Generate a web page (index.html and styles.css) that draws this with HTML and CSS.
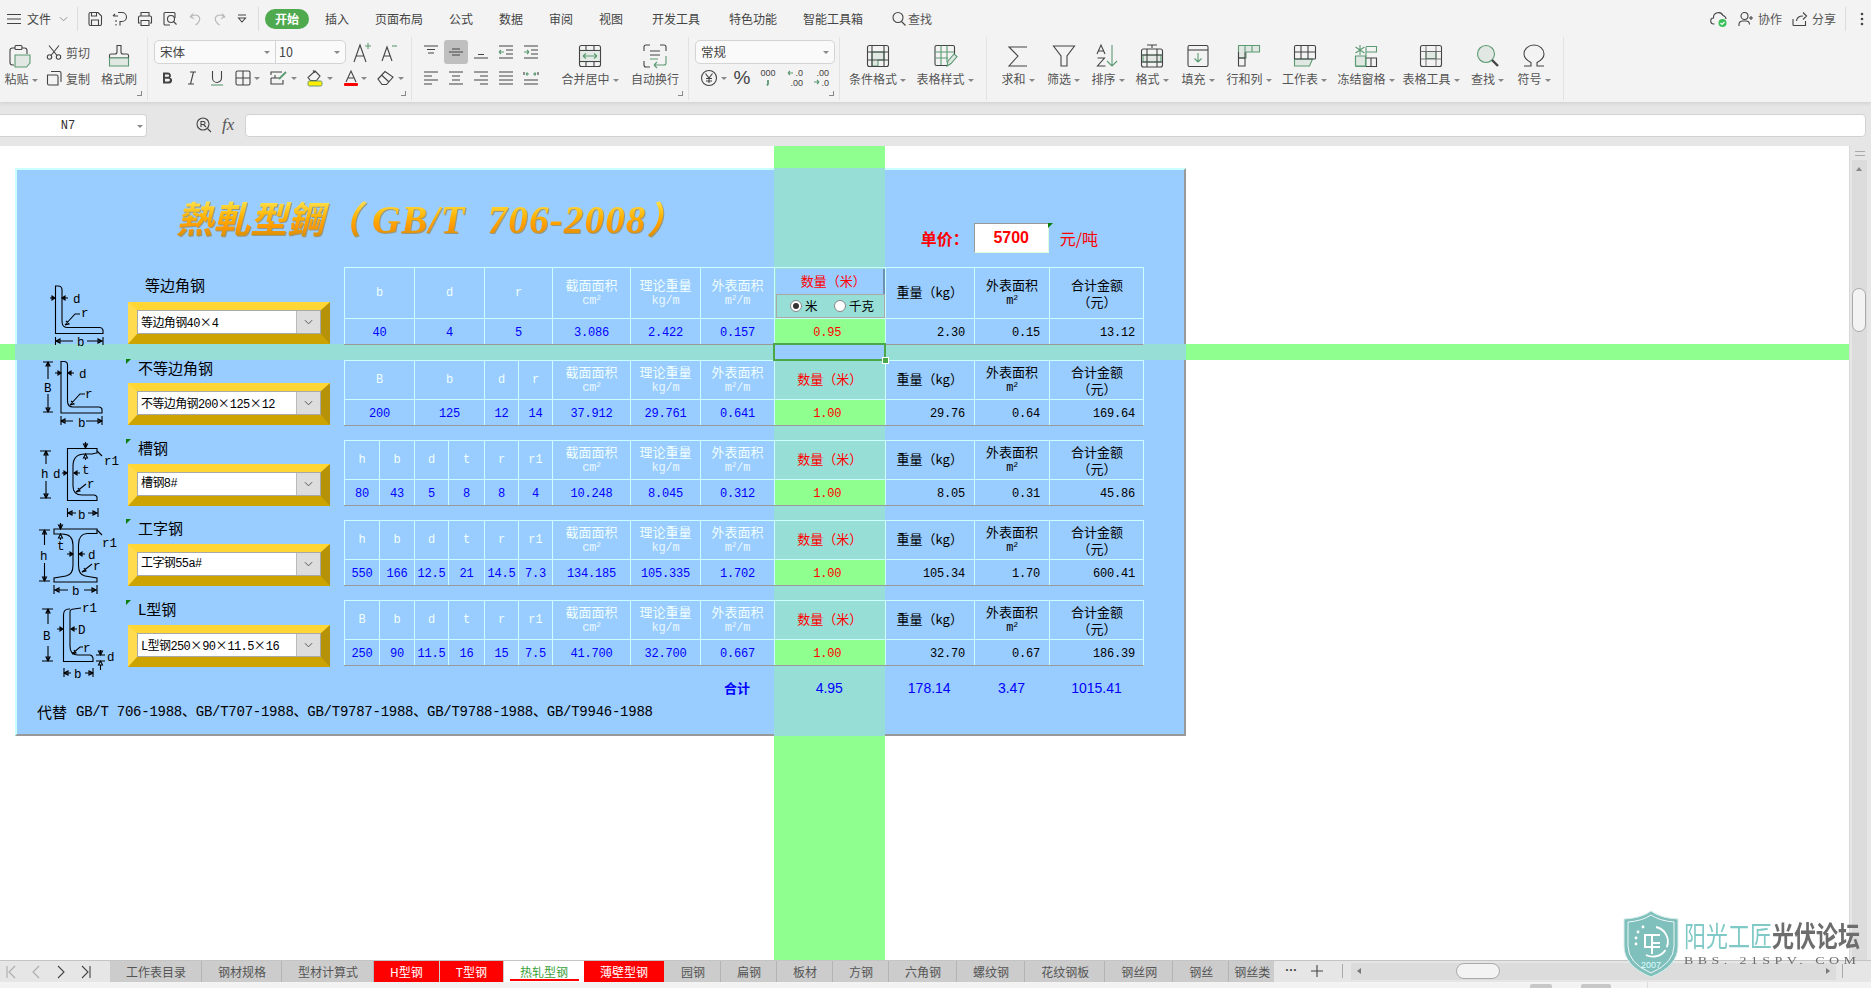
FILE: index.html
```html
<!DOCTYPE html>
<html lang="zh">
<head>
<meta charset="utf-8">
<title>热轧型钢</title>
<link rel="stylesheet" href="styles.css">
</head>
<body>
<div class="app">

<header class="topbar">
  <svg class="i14 menu" viewBox="0 0 14 14"><path class="s" d="M0 2.5h14M0 7h14M0 11.5h14"/></svg>
  <span class="file">文件</span>
  <svg class="chev" viewBox="0 0 10 6"><path class="l" d="M1 1l4 4 4-4"/></svg>
  <i class="vsep"></i>
  <svg class="i16 q1" viewBox="0 0 16 16"><path class="s" d="M2 3q0-1.500 1.500-1.500H11L14.500 5v8q0 1.500-1.500 1.500H3.500Q2 14.500 2 13zM4.500 14.500V9h7v5.500M4.500 1.500V5h5V1.500"/></svg>
  <svg class="i16 q" viewBox="0 0 16 16"><path class="s" d="M1 5h5M1 5l2-2M6 1.500h4a4.500 4.500 0 010 9H8v4M4 9v2M4 13v1.500"/></svg>
  <svg class="i16 q" viewBox="0 0 16 16"><path class="s" d="M4 5V1.500h8V5M3 12H1.500V6.500Q1.500 5 3 5h10q1.500 0 1.500 1.500V12H13M4 9.500h8v5H4z"/></svg>
  <svg class="i16 q" viewBox="0 0 16 16"><path class="s" d="M13 7V2.500Q13 1.500 12 1.500H3Q2 1.500 2 2.500V13q0 1 1 1h5"/><circle class="s" cx="9" cy="8" r="3.500"/><path class="s" d="M11.500 10.500l3 3"/></svg>
  <svg class="i16 q dim" viewBox="0 0 16 16"><path class="s" d="M3 6l3-3.500M3 6l4 1.500M3.500 6Q7 3 10.500 4.500q3.500 2 1.500 6-1 2-3.500 3.500"/></svg>
  <svg class="i16 q dim" viewBox="0 0 16 16"><path class="s" d="M13 6l-3-3.500M13 6l-4 1.500M12.500 6Q9 3 5.500 4.500q-3.500 2-1.500 6 1 2 3.500 3.500"/></svg>
  <svg class="i10 q" viewBox="0 0 10 10"><path class="s" d="M1 1h8M1.500 4l3.500 4 3.500-4z"/></svg>
  <i class="vsep v2"></i>
  <span class="pill">开始</span>
  <nav class="tabs-top">
    <span class="w50">插入</span><span class="w74">页面布局</span><span class="w50">公式</span><span class="w50">数据</span><span class="w50">审阅</span><span class="w53">视图</span><span class="w77">开发工具</span><span class="w74">特色功能</span><span class="w88">智能工具箱</span>
  </nav>
  <span class="search"><svg class="i16" viewBox="0 0 16 16"><circle class="s" cx="7" cy="6.500" r="5"/><path class="s" d="M10.500 10.500l4 4"/></svg>查找</span>
  <div class="top-right">
    <svg class="i18" viewBox="0 0 18 18"><path class="s" d="M4.500 14H4a3 3 0 01-.5-6A5 5 0 0113 5.500 4 4 0 0116 9"/><circle cx="12.500" cy="13" r="4" fill="#3cc15a"/><path d="M10.500 13l1.500 1.500 2.500-2.500" fill="none" stroke="#fff" stroke-width="1.100"/></svg>
    <svg class="i16 mlg" viewBox="0 0 16 16"><circle class="s" cx="6.500" cy="5" r="3.500"/><path class="s" d="M1 15v-1.500Q1 10 5 10h3q3.500 0 3.500 3.500M11 7h4M13 5v4"/></svg>
    <span class="tx">协作</span>
    <svg class="i16 mlg" viewBox="0 0 16 16"><path class="s" d="M1 8v5.500q0 1 1 1h11.500V10M4.500 10Q5 5 11 5M11 1.500L14.500 5 11 8.500"/></svg>
    <span class="tx">分享</span>
    <i class="vsep v3"></i>
    <svg class="dots" viewBox="0 0 4 14"><circle cx="2" cy="2" r="1.300" fill="#444"/><circle cx="2" cy="7" r="1.300" fill="#444"/><circle cx="2" cy="12" r="1.300" fill="#444"/></svg>
  </div>
</header>

<section class="ribbon">
  <div class="group g1 corner">
    <div class="big paste">
      <svg class="i24" viewBox="0 0 24 24"><path class="s" d="M7 4H4.500Q2 4 2 6.500v12Q2 21 4.500 21H6M19 10V6.500Q19 4 16.500 4H14"/><rect class="s" x="7" y="1.500" width="7" height="4" rx="1"/><path class="gf" d="M7 11h15v8l-3.500 4H7z"/></svg>
      <span class="lb">粘贴<b class="cr"></b></span>
    </div>
    <div class="small-col">
      <span class="sm"><svg class="i16" viewBox="0 0 16 16"><circle class="s" cx="3.500" cy="13" r="2.200"/><circle class="s" cx="12.500" cy="13" r="2.200"/><path class="s" d="M5 11.500L13 1.500M11 11.500L3 1.500"/></svg>剪切</span>
      <span class="sm"><svg class="i16" viewBox="0 0 16 16"><path class="s" d="M5 1.500h8.500Q15 1.500 15 3v9M1.500 5h9Q12 5 12 6.500V15H3Q1.500 15 1.500 13.500z"/></svg>复制</span>
    </div>
    <div class="big brush">
      <svg class="i24" viewBox="0 0 24 24"><path class="s" d="M10 1.500h4V8q0 2 2 2h4q1.500 0 1.500 1.500V14h-19v-2.500Q2.500 10 4 10h4q2 0 2-2z"/><path class="gf" d="M2.500 14h19v8h-19z"/></svg>
      <span class="lb">格式刷</span>
    </div>
  </div>

  <div class="group g2 corner">
    <div class="row-a">
      <div class="combo font"><span class="combo-main">宋体<b class="cr"></b></span><span class="combo-size">10<b class="cr"></b></span></div>
      <svg class="i18 a1" viewBox="0 0 18 22"><path class="s" d="M1 21L7 4l6 17M3.500 15h7"/><path class="gs" d="M12 5h6M15 2v6"/></svg>
      <svg class="i18 a2" viewBox="0 0 18 22"><path class="s" d="M2 20L7 6l5 14M4 15h6"/><path class="gs" d="M12 5h5"/></svg>
    </div>
    <div class="row-b fontrow">
      <span class="cell"><svg class="i14" viewBox="0 0 14 14"><path d="M3 1.500h5a3 3 0 012 5.200 3 3 0 01-1.500 5.800H3zM5 3.500v2.300h3a1.150 1.150 0 000-2.300zM5 7.700v2.800h3.500a1.400 1.400 0 000-2.800z" fill="#444" fill-rule="evenodd"/></svg></span>
      <span class="cell"><svg class="i14" viewBox="0 0 14 14"><path class="s" d="M5 1h6M3 13h6M8.500 1L5.500 13"/></svg></span>
      <span class="cell"><svg class="i16" viewBox="0 0 16 16"><path class="s" d="M3.500 1v7a4.500 4.500 0 009 0V1"/><path class="gs" d="M2 15h12"/></svg></span>
      <span class="cell"><svg class="i16" viewBox="0 0 16 16"><path class="s" d="M1 2.500Q1 1 2.500 1h11Q15 1 15 2.500v11q0 1.500-1.500 1.500h-11Q1 15 1 13.500zM8 1v14M1 8h14"/></svg><b class="cr"></b></span>
      <span class="cell"><svg class="i18" viewBox="0 0 18 16"><path class="s" d="M1 8h9M1 5V2h11M1 8v6h12v-4M5 5v3"/><path class="gs2" d="M9 9l7-7"/></svg><b class="cr"></b></span>
      <span class="cell"><svg class="i18" viewBox="0 0 18 18"><path class="s" d="M9 2l5 5-3.500 4.500h-6L2 8.500zM7 1.500l2 2"/><rect x="2" y="12" width="14" height="5" rx="1.500" fill="#ffee00" stroke="#6b9a74"/></svg><b class="cr"></b></span>
      <span class="cell"><svg class="i14 h16" viewBox="0 0 14 16"><path class="s" d="M2 12L7 1l5 11M4 8h6"/><rect x="0" y="13" width="14" height="3" rx="1" fill="#f00"/></svg><b class="cr"></b></span>
      <span class="cell"><svg class="i18" viewBox="0 0 18 16"><path class="s" d="M1 9l7-7.500L16 7l-6.500 7.500H5zM4.500 5l7 6.500"/></svg><b class="cr"></b></span>
    </div>
  </div>

  <div class="group g3 corner">
    <div class="align-block">
      <div class="al-row">
        <span class="al"><svg class="i16" viewBox="0 0 16 16"><path class="s" d="M1 2h14M4 5.500h8M5 9h6"/></svg></span>
        <span class="al on"><svg class="i16" viewBox="0 0 16 16"><path class="s" d="M1 8h14M4 5h8M4 11h8"/></svg></span>
        <span class="al"><svg class="i16" viewBox="0 0 16 16"><path class="s" d="M1 14h14M5 10.500h6"/></svg></span>
        <span class="al"><svg class="i16" viewBox="0 0 16 16"><path class="s" d="M1 2h14M8 6h7M8 10h7M1 14h14"/><path class="gs" d="M1 8h5M1 8l2-2M1 8l2 2"/></svg></span>
        <span class="al"><svg class="i16" viewBox="0 0 16 16"><path class="s" d="M1 2h14M8 6h7M8 10h7M1 14h14"/><path class="gs" d="M1 8h5M6 8L4 6M6 8l-2 2"/></svg></span>
      </div>
      <div class="al-row">
        <span class="al"><svg class="i16" viewBox="0 0 16 16"><path class="s" d="M1 2h14M1 6h8M1 10h14M1 14h8"/></svg></span>
        <span class="al"><svg class="i16" viewBox="0 0 16 16"><path class="s" d="M1 2h14M4 6h8M1 14h14M4 10h8"/></svg></span>
        <span class="al"><svg class="i16" viewBox="0 0 16 16"><path class="s" d="M1 2h14M7 6h8M1 10h14M7 14h8"/></svg></span>
        <span class="al"><svg class="i16" viewBox="0 0 16 16"><path class="s" d="M1 2h14M1 6h14M1 10h14M1 14h14"/></svg></span>
        <span class="al"><svg class="i16" viewBox="0 0 16 16"><path class="s" d="M1 2v3M15 2v3M1 10h14M1 14h14"/><path class="gs" d="M3 4h3M3 4l1.500-1.500M3 4l1.500 1.500M13 4h-3M13 4l-1.500-1.500M13 4l-1.500 1.500"/></svg></span>
      </div>
    </div>
    <div class="big merge">
      <svg class="i24" viewBox="0 0 24 24"><path class="gf2" d="M2 5h20v14H2z"/><rect class="s" x="1.500" y="1.500" width="21" height="21" rx="2"/><path class="s" d="M1.500 6.500h21M1.500 17.500h21M8 1.500v5M16 1.500v5M8 17.500v5M16 17.500v5"/><path class="gs" d="M5 12h14M5 12l3-2.500M5 12l3 2.500M19 12l-3-2.500M19 12l-3 2.500"/></svg>
      <span class="lb">合并居中<b class="cr"></b></span>
    </div>
    <div class="big wrap">
      <svg class="i24" viewBox="0 0 24 24"><path class="s" d="M1 7V3q0-2 2-2h4M17 1h4q2 0 2 2v4M1 17v4q0 2 2 2h4M7 7h10M7 11h10"/><path class="gs" d="M23 12v7q0 2-2 2H11M11 21l3-3M11 21l3 3M7 15h8"/></svg>
      <span class="lb">自动换行</span>
    </div>
  </div>

  <div class="group g4 corner">
    <div class="combo num"><span class="combo-main">常规<b class="cr"></b></span></div>
    <div class="numrow">
      <span class="cell"><svg class="i18" viewBox="0 0 18 18"><circle class="s" cx="9" cy="9" r="7.500"/><path class="s" d="M5.500 4.500L9 9l3.500-4.500M9 9v5M6 9.500h6M6 12h6"/></svg><b class="cr"></b></span>
      <span class="cell"><span class="pct">%</span></span>
      <span class="cell"><svg class="i18" viewBox="0 0 18 18"><text class="dt" x="9" y="7" text-anchor="middle">000</text><path class="gs2" d="M9 11v4l-1 1.500"/></svg></span>
      <span class="cell"><svg class="i18" viewBox="0 0 18 18"><text class="dt" x="17" y="7" text-anchor="end">.0</text><text class="dt" x="17" y="17" text-anchor="end">.00</text><path class="gs" d="M2 4h5M2 4l2-2M2 4l2 2"/></svg></span>
      <span class="cell"><svg class="i18" viewBox="0 0 18 18"><text class="dt" x="17" y="7" text-anchor="end">.00</text><text class="dt" x="17" y="17" text-anchor="end">.0</text><path class="gs" d="M2 13h5M7 13l-2-2M7 13l-2 2"/></svg></span>
    </div>
  </div>

  <div class="group g5">
    <div class="big b72">
      <svg class="i24" viewBox="0 0 24 24"><path class="gf" d="M6 8h12v8h-6v6H6z"/><rect class="s" x="1.500" y="1.500" width="21" height="21" rx="2"/><path class="s" d="M1.500 8h21M1.500 16h21M6 1.500v21M18 1.500v21"/></svg>
      <span class="lb">条件格式<b class="cr"></b></span>
    </div>
    <div class="big b70">
      <svg class="i24" viewBox="0 0 24 24"><path class="s" d="M2 15V3q0-1.500 1.500-1.500H20Q21.500 1.500 21.500 3v8M2 15v5q0 1.500 1.500 1.500H14"/><path class="gs" d="M2 8h19M2 14h13M8 1.500V21M14 1.500v17"/><path class="gf" d="M14 22l1-5 6-7 3 2.500-6 7z"/></svg>
      <span class="lb">表格样式<b class="cr"></b></span>
    </div>
  </div>

  <div class="group g6">
    <div class="big"><svg class="i24" viewBox="0 0 24 24"><path class="s" d="M21 3H3l9 9-9 10h18"/></svg><span class="lb">求和<b class="cr"></b></span></div>
    <div class="big"><svg class="i24" viewBox="0 0 24 24"><path class="s" d="M1.500 2h21L15 12v10H9V12z"/></svg><span class="lb">筛选<b class="cr"></b></span></div>
    <div class="big"><svg class="i24" viewBox="0 0 24 24"><path class="s" d="M1 10L5 1l4 9M2.500 7h5M1.500 14h7l-7 8h8"/><path class="gs" d="M16 1v21M16 22l-5-5M16 22l5-5"/></svg><span class="lb">排序<b class="cr"></b></span></div>
    <div class="big"><svg class="i24" viewBox="0 0 24 24"><path class="gf" d="M3 11h18v7H3z"/><path class="s" d="M7 1h10M12 1v3"/><rect class="s" x="1.500" y="5" width="21" height="18" rx="2"/><path class="s" d="M1.500 11h21M1.500 18h21M7 5v18M17 5v18"/></svg><span class="lb">格式<b class="cr"></b></span></div>
    <div class="big"><svg class="i24" viewBox="0 0 24 24"><rect class="s" x="2" y="1.500" width="20" height="21" rx="1.500"/><path class="s" d="M2 6h20"/><path class="gs" d="M12 9v9M12 18l-3.500-3.500M12 18l3.500-3.500"/></svg><span class="lb">填充<b class="cr"></b></span></div>
    <div class="big"><svg class="i24" viewBox="0 0 24 24"><path class="gf" d="M1.500 1.500h21V8H9v6H1.500z"/><path class="gs" d="M8 1.500V8M15 1.500V8"/><path class="s" d="M1.500 8v14H8V8"/><path class="s" d="M1.500 14H8"/></svg><span class="lb">行和列<b class="cr"></b></span></div>
    <div class="big"><svg class="i24" viewBox="0 0 24 24"><path class="gf" d="M1.500 15h18l-3 7h-15z"/><path class="s" d="M1.500 15V3q0-1.500 1.500-1.500h18Q22.500 1.500 22.500 3v11q0 1-1 1H1.500M8 1.500V15M15 1.500V15M1.500 8h21"/></svg><span class="lb">工作表<b class="cr"></b></span></div>
    <div class="big"><svg class="i24" viewBox="0 0 24 24"><path class="gf" d="M1.500 12h10v10h-10z"/><path class="gs" d="M6 1v10M1.500 3l9 6M10.500 3l-9 6M1.500 12v9q0 1.500 1.500 1.500h9V3"/><path class="gs" d="M12 2.500h10.500V8H12"/><path class="s" d="M12 14h10.500v8.500H12M17 14v8.500"/></svg><span class="lb">冻结窗格<b class="cr"></b></span></div>
    <div class="big"><svg class="i24" viewBox="0 0 24 24"><rect class="s" x="1.500" y="1.500" width="21" height="21" rx="2"/><path class="gf" d="M7 7.500h10v7H7z"/><path class="s2" d="M7 1.500v21M17 1.500v21M1.500 7.500h21M1.500 15h21"/></svg><span class="lb">表格工具<b class="cr"></b></span></div>
    <div class="big"><svg class="i24" viewBox="0 0 24 24"><circle class="gf" cx="10" cy="10" r="8.500"/><path d="M16 16l6 6" stroke="#444" stroke-width="2.400" fill="none"/></svg><span class="lb">查找<b class="cr"></b></span></div>
    <div class="big"><svg class="i24" viewBox="0 0 24 24"><path class="s" d="M2 22h7v-3.500Q2 15 2 10a10 9 0 0120 0q0 5-7 8.500V22h7"/></svg><span class="lb">符号<b class="cr"></b></span></div>
  </div>
</section>

<section class="formula">
  <div class="namebox">N7<b class="cr"></b></div>
  <svg class="i16 zoomer" viewBox="0 0 16 16"><circle class="s" cx="7" cy="7" r="6"/><path class="s" d="M5 10V4.500h2.500a1.500 1.500 0 010 3H5M7.500 7.500L10 10M11.500 11.500l3.500 3.500"/></svg>
  <span class="fx">fx</span>
  <div class="fbox"></div>
</section>

<main class="sheet">
  <div class="viewport">
    <i class="band-col"></i>
    <i class="band-row"></i>
    <article class="panel">
      <i class="pband-col"></i>
      <i class="pband-row"></i>
      <div class="cellsel"><i class="handle"></i></div>

      <div class="headline">
        <h1 class="title"><span class="ttl-cj">熱軋型鋼（</span><span class="ttl-la"> GB/T  706-2008</span><span class="ttl-cj">）</span></h1>
        <div class="price">
          <span class="price-l">单价：</span>
          <span class="price-v">5700</span>
          <span class="price-u">元/吨</span>
        </div>
      </div>

      <div class="sec sec1">
        <svg class="sk" viewBox="17 267 109 90">
          <path class="ln" d="M55.500 286V333.500H103V330Q102 327.500 100 327.500H67Q62 327.500 62 321V290Q62 286 58 286Z"/>
          <path class="ln" d="M50 298h5M62 298h6M55 298l-3-2v4zM62 298l3-2v4zM65 325l10-11h5M65 325l4-1-3-3M55.500 337v8M103 337v8M56 341h17M87 341h15M56 341l4-2v4zM102 341l-4-2v4z"/>
          <text class="sktx" x="73" y="303">d</text><text class="sktx" x="81" y="317">r</text><text class="sktx" x="77" y="346">b</text>
        </svg>
        <div class="wd">
          <div class="name n1">等边角钢</div>
          <div class="frame"><div class="dd"><span class="dd-t">等边角钢40<b class="x">×</b>4</span><span class="dd-b"><svg class="ddi" viewBox="0 0 10 6"><path class="dl" d="M1 1l4 4 4-4"/></svg></span></div></div>
        </div>
        <div class="tbl t1">
          <div class="h s2">b</div><div class="h s2">d</div><div class="h s2">r</div>
          <div class="h"><span class="cj">截面面积</span><span class="un">cm<sup>2</sup></span></div>
          <div class="h"><span class="cj">理论重量</span><span class="un">kg/m</span></div>
          <div class="h"><span class="cj">外表面积</span><span class="un">m<sup>2</sup>/m</span></div>
          <div class="h qty-first"><div class="qtop">数量（米）</div><div class="qopt"><i class="radio on"></i><span class="rl">米</span><i class="radio"></i><span class="rl">千克</span></div></div>
          <div class="h k one"><span class="cj">重量（kg）</span></div>
          <div class="h k"><span class="cj">外表面积</span><span class="un k">m<sup>2</sup></span></div>
          <div class="h k"><span class="cj">合计金额</span><span class="cj">（元）</span></div>
          <div class="v s2">40</div><div class="v s2">4</div><div class="v s2">5</div><div class="v">3.086</div><div class="v">2.422</div><div class="v">0.157</div><div class="v qv">0.95</div><div class="v rt">2.30</div><div class="v rt">0.15</div><div class="v rt">13.12</div>
        </div>
      </div>

      <div class="sec sec2">
        <svg class="sk" viewBox="17 360 109 90">
          <path class="ln" d="M61 361.500V413H102V409Q101 407 99 407H73Q67.500 407 67.500 401V365Q67.500 361.500 64 361.500Z"/>
          <path class="ln" d="M43 362h10M48 362v17M48 394v18M43 412h10M48 362l-2 4h4zM48 412l-2-4h4zM55 373h6M68 373h6M61 373l-3-2v4zM68 373l3-2v4zM70 405l10-11h5M70 405l4-1-3-3M61 416v9M102 416v9M61 421h12M86 421h15M61 421l4-2v4zM102 421l-4-2v4z"/>
          <text class="sktx" x="44" y="392">B</text><text class="sktx" x="79" y="378">d</text><text class="sktx" x="85" y="398">r</text><text class="sktx" x="78" y="427">b</text>
        </svg>
        <div class="wd">
          <div class="name"><i class="tick"></i>不等边角钢</div>
          <div class="frame"><div class="dd"><span class="dd-t">不等边角钢200<b class="x">×</b>125<b class="x">×</b>12</span><span class="dd-b"><svg class="ddi" viewBox="0 0 10 6"><path class="dl" d="M1 1l4 4 4-4"/></svg></span></div></div>
        </div>
        <div class="tbl">
          <div class="h s2">B</div><div class="h s2">b</div><div class="h">d</div><div class="h">r</div>
          <div class="h"><span class="cj">截面面积</span><span class="un">cm<sup>2</sup></span></div>
          <div class="h"><span class="cj">理论重量</span><span class="un">kg/m</span></div>
          <div class="h"><span class="cj">外表面积</span><span class="un">m<sup>2</sup>/m</span></div>
          <div class="h hq one"><span class="cj">数量（米）</span></div>
          <div class="h k one"><span class="cj">重量（kg）</span></div>
          <div class="h k"><span class="cj">外表面积</span><span class="un k">m<sup>2</sup></span></div>
          <div class="h k"><span class="cj">合计金额</span><span class="cj">（元）</span></div>
          <div class="v s2">200</div><div class="v s2">125</div><div class="v">12</div><div class="v">14</div><div class="v">37.912</div><div class="v">29.761</div><div class="v">0.641</div><div class="v qv">1.00</div><div class="v rt">29.76</div><div class="v rt">0.64</div><div class="v rt">169.64</div>
        </div>
      </div>

      <div class="sec">
        <svg class="sk" viewBox="17 440 109 90">
          <path class="ln" d="M97 448.500H67.500V500.500H97V497Q96 495 94 495H82Q73 495 73 486V466Q73 454 85 454H92Q96 453 97 453Z"/>
          <path class="ln" d="M40 451h11M46 451v13M46 481v17M40 498h11M46 451l-2 4h4zM46 498l-2-4h4zM62 473h5M74 473h6M67 473l-3-2v4zM74 473l3-2v4zM85.500 442v6M85.500 448l-2-4h4zM85.500 454l-2 4h4zM85.500 458v2M97 451l5 5M76 492l10-8M76 492l4-1-2-3M67.500 508v9M98 508v9M68 513h8M88 513h9M68 513l4-2v4zM97 513l-4-2v4z"/>
          <text class="sktx" x="41" y="478">h</text><text class="sktx" x="53" y="478">d</text><text class="sktx" x="82" y="474">t</text><text class="sktx" x="104" y="465">r1</text><text class="sktx" x="87" y="488">r</text><text class="sktx" x="78" y="519">b</text>
        </svg>
        <div class="wd">
          <div class="name"><i class="tick"></i>槽钢</div>
          <div class="frame f1"><div class="dd"><span class="dd-t">槽钢8#</span><span class="dd-b"><svg class="ddi" viewBox="0 0 10 6"><path class="dl" d="M1 1l4 4 4-4"/></svg></span></div></div>
        </div>
        <div class="tbl">
          <div class="h">h</div><div class="h">b</div><div class="h">d</div><div class="h">t</div><div class="h">r</div><div class="h">r1</div>
          <div class="h"><span class="cj">截面面积</span><span class="un">cm<sup>2</sup></span></div>
          <div class="h"><span class="cj">理论重量</span><span class="un">kg/m</span></div>
          <div class="h"><span class="cj">外表面积</span><span class="un">m<sup>2</sup>/m</span></div>
          <div class="h hq one"><span class="cj">数量（米）</span></div>
          <div class="h k one"><span class="cj">重量（kg）</span></div>
          <div class="h k"><span class="cj">外表面积</span><span class="un k">m<sup>2</sup></span></div>
          <div class="h k"><span class="cj">合计金额</span><span class="cj">（元）</span></div>
          <div class="v">80</div><div class="v">43</div><div class="v">5</div><div class="v">8</div><div class="v">8</div><div class="v">4</div><div class="v">10.248</div><div class="v">8.045</div><div class="v">0.312</div><div class="v qv">1.00</div><div class="v rt">8.05</div><div class="v rt">0.31</div><div class="v rt">45.86</div>
        </div>
      </div>

      <div class="sec">
        <svg class="sk" viewBox="17 520 109 90">
          <path class="ln" d="M54 529H97V533.500H87Q78.500 534 78.500 545V565Q78.500 575 85 576L97 578V582H54V578L66 576Q73 575 73 565V545Q73 534 62 534H54Z"/>
          <path class="ln" d="M39 530h11M44.500 530v15M44.500 563v18M39 581h11M44.500 530l-2 4h4zM44.500 581l-2-4h4zM67 554h6M79 554h6M73 554l-3-2v4zM79 554l3-2v4zM60.500 523v6M60.500 529l-2-4h4zM60.500 534l-2 4h4zM60.500 538v2M97 530l5 5M82 572l10-8M82 572l4-1-2-3M54 585v9M97 585v9M55 590h13M84 590h12M55 590l4-2v4zM96 590l-4-2v4z"/>
          <text class="sktx" x="40" y="560">h</text><text class="sktx" x="57" y="550">t</text><text class="sktx" x="88" y="559">d</text><text class="sktx" x="93" y="570">r</text><text class="sktx" x="102" y="547">r1</text><text class="sktx" x="72" y="595">b</text>
        </svg>
        <div class="wd">
          <div class="name"><i class="tick"></i>工字钢</div>
          <div class="frame f1"><div class="dd"><span class="dd-t">工字钢55a#</span><span class="dd-b"><svg class="ddi" viewBox="0 0 10 6"><path class="dl" d="M1 1l4 4 4-4"/></svg></span></div></div>
        </div>
        <div class="tbl">
          <div class="h">h</div><div class="h">b</div><div class="h">d</div><div class="h">t</div><div class="h">r</div><div class="h">r1</div>
          <div class="h"><span class="cj">截面面积</span><span class="un">cm<sup>2</sup></span></div>
          <div class="h"><span class="cj">理论重量</span><span class="un">kg/m</span></div>
          <div class="h"><span class="cj">外表面积</span><span class="un">m<sup>2</sup>/m</span></div>
          <div class="h hq one"><span class="cj">数量（米）</span></div>
          <div class="h k one"><span class="cj">重量（kg）</span></div>
          <div class="h k"><span class="cj">外表面积</span><span class="un k">m<sup>2</sup></span></div>
          <div class="h k"><span class="cj">合计金额</span><span class="cj">（元）</span></div>
          <div class="v">550</div><div class="v">166</div><div class="v">12.5</div><div class="v">21</div><div class="v">14.5</div><div class="v">7.3</div><div class="v">134.185</div><div class="v">105.335</div><div class="v">1.702</div><div class="v qv">1.00</div><div class="v rt">105.34</div><div class="v rt">1.70</div><div class="v rt">600.41</div>
        </div>
      </div>

      <div class="sec">
        <svg class="sk" viewBox="17 600 109 90">
          <path class="ln" d="M70 609H69Q63.500 609 63.500 615V661.500H93V658Q92 655 90 655H78Q70 655 70 646V612Q70 609 74 609"/>
          <path class="ln" d="M42 609h11M48 609v15M48 646v15M42 661h11M48 609l-2 4h4zM48 661l-2-4h4zM57 629h6M71 629h6M63 629l-3-2v4zM71 629l3-2v4zM72 654l8-7h3M72 654l4-1-2-3M74 609l7-1M100.500 650v5M96 655h9M100.500 655l-2-4h4zM100.500 661l-2 4h4zM96 661h9M100.500 665v5M64 668v9M93 668v9M64 673h7M85 673h8M64 673l4-2v4zM93 673l-4-2v4z"/>
          <text class="sktx" x="43" y="640">B</text><text class="sktx" x="78" y="634">D</text><text class="sktx" x="83" y="652">r</text><text class="sktx" x="82" y="612">r1</text><text class="sktx" x="107" y="661">d</text><text class="sktx" x="74" y="678">b</text>
        </svg>
        <div class="wd">
          <div class="name"><i class="tick"></i>L型钢</div>
          <div class="frame f2"><div class="dd"><span class="dd-t">L型钢250<b class="x">×</b>90<b class="x">×</b>11.5<b class="x">×</b>16</span><span class="dd-b"><svg class="ddi" viewBox="0 0 10 6"><path class="dl" d="M1 1l4 4 4-4"/></svg></span></div></div>
        </div>
        <div class="tbl">
          <div class="h">B</div><div class="h">b</div><div class="h">d</div><div class="h">t</div><div class="h">r</div><div class="h">r1</div>
          <div class="h"><span class="cj">截面面积</span><span class="un">cm<sup>2</sup></span></div>
          <div class="h"><span class="cj">理论重量</span><span class="un">kg/m</span></div>
          <div class="h"><span class="cj">外表面积</span><span class="un">m<sup>2</sup>/m</span></div>
          <div class="h hq one"><span class="cj">数量（米）</span></div>
          <div class="h k one"><span class="cj">重量（kg）</span></div>
          <div class="h k"><span class="cj">外表面积</span><span class="un k">m<sup>2</sup></span></div>
          <div class="h k"><span class="cj">合计金额</span><span class="cj">（元）</span></div>
          <div class="v">250</div><div class="v">90</div><div class="v">11.5</div><div class="v">16</div><div class="v">15</div><div class="v">7.5</div><div class="v">41.700</div><div class="v">32.700</div><div class="v">0.667</div><div class="v qv">1.00</div><div class="v rt">32.70</div><div class="v rt">0.67</div><div class="v rt">186.39</div>
        </div>
      </div>

      <div class="totals">
        <span class="t-name">合计</span><span>4.95</span><span>178.14</span><span>3.47</span><span>1015.41</span>
      </div>
      <p class="note"><span class="note-cj">代替</span>GB/T 706-1988、GB/T707-1988、GB/T9787-1988、GB/T9788-1988、GB/T9946-1988</p>
    </article>
  </div>
  <aside class="vscroll">
    <div class="vs-top"></div>
    <div class="vs-track"><i class="vs-up"></i><i class="vs-thumb"></i></div>
  </aside>
</main>

<footer class="tabbar">
  <div class="tabnav">
    <svg class="nav dim" viewBox="0 0 10 14"><path class="s" d="M1 1v12M9 1L3 7l6 6"/></svg>
    <svg class="nav dim" viewBox="0 0 10 14"><path class="s" d="M8 1L2 7l6 6"/></svg>
    <svg class="nav" viewBox="0 0 10 14"><path class="s" d="M2 1l6 6-6 6"/></svg>
    <svg class="nav" viewBox="0 0 10 14"><path class="s" d="M1 1l6 6-6 6M9 1v12"/></svg>
  </div>
  <div class="sheets">
    <span class="st">工作表目录</span><span class="st">钢材规格</span><span class="st">型材计算式</span><span class="st red">H型钢</span><span class="st red">T型钢</span><span class="st act">热轧型钢</span><span class="st red">薄壁型钢</span><span class="st">园钢</span><span class="st">扁钢</span><span class="st">板材</span><span class="st">方钢</span><span class="st">六角钢</span><span class="st">螺纹钢</span><span class="st">花纹钢板</span><span class="st">钢丝网</span><span class="st">钢丝</span><span class="st cut">钢丝类</span>
  </div>
  <span class="more">···</span>
  <svg class="plus" viewBox="0 0 12 12"><path class="s" d="M6 0v12M0 6h12"/></svg>
  <i class="hs-sep hs-a"></i>
  <div class="hscroll"><i class="hs-l"></i><i class="hs-thumb"></i><i class="hs-r"></i></div>
  <i class="hs-sep hs-b"></i>
</footer>
<div class="status"><i class="st-a"></i><i class="st-b"></i><i class="st-c"></i></div>

<div class="mark">
  <svg class="shield" viewBox="0 0 58 68">
    <path d="M29 1Q38 8 56 9V36Q56 56 29 67Q2 56 2 36V9Q20 8 29 1Z" fill="#7fc0bd" stroke="#d8eeec" stroke-width="1"/>
    <path d="M29 5Q38 11 52 12V36Q52 53 29 63Q6 53 6 36V12Q20 11 29 5Z" fill="none" stroke="#eef8f7" stroke-width="1"/>
    <path d="M34 17A15 15 0 1 1 24 45" fill="none" stroke="#fff" stroke-width="1.800" stroke-dasharray="26 3"/>
    <path d="M38 25H23V37H38M30 25V44M30 33H38" fill="none" stroke="#fff" stroke-width="2"/>
    <circle cx="14" cy="28" r="1.400" fill="#fff"/><circle cx="16" cy="22" r="1.400" fill="#fff"/><circle cx="21" cy="17" r="1.400" fill="#fff"/><circle cx="14" cy="34" r="1.400" fill="#fff"/>
    <text class="mk-y" x="29" y="58" text-anchor="middle">2007</text>
  </svg>
  <div class="mk-text">
    <div class="mk-cn"><span class="mk-t">阳光工匠</span><span class="mk-g">光伏论坛</span></div>
    <div class="mk-url">BBS. 21SPV. COM</div>
  </div>
</div>

</div>
</body>
</html>
```

FILE: styles.css
```css
* { box-sizing: border-box; }
html, body { margin: 0; height: 100%; overflow: hidden; }
body { font-family: "Noto Sans CJK SC", "Liberation Sans", sans-serif; font-size: 12px; color: #444; background: #f3f3f3; }
i, b { font-style: normal; font-weight: normal; }
.app { position: relative; width: 1871px; height: 988px; display: flex; flex-direction: column; overflow: hidden; }

/* svg helpers */
svg { display: block; flex: none; overflow: visible; }
.s { fill: none; stroke: #444; stroke-width: 1.1; }
.s2 { fill: none; stroke: #666; stroke-width: .9; }
.l { fill: none; stroke: #888; stroke-width: 1; }
.dl { fill: none; stroke: #555; stroke-width: 1.1; }
.gs { fill: none; stroke: #5b9a72; stroke-width: 1.1; }
.gs2 { fill: none; stroke: #5b9a72; stroke-width: 1.8; }
.gf { fill: #e1e8e3; stroke: #5b9a72; stroke-width: 1.1; }
.gf2 { fill: #e4ebe6; stroke: none; }
.dim { opacity: .35; }
.i10 { width: 10px; height: 10px; }
.i14 { width: 14px; height: 14px; }
.i16 { width: 16px; height: 16px; }
.i18 { width: 18px; height: 18px; }
.i24 { width: 24px; height: 24px; }
.h16 { height: 16px; }
.cr { display: inline-block; width: 0; height: 0; margin-left: 3px; vertical-align: middle; border-left: 3px solid transparent; border-right: 3px solid transparent; border-top: 3px solid #888; }

/* top bar */
.topbar { height: 37px; flex: none; display: flex; align-items: center; padding-left: 7px; background: #f3f3f3; font-size: 12px; }
.menu { margin-right: 6px; }
.file { width: 25px; white-space: nowrap; }
.chev { width: 9px; height: 6px; margin-left: 7px; }
.vsep { width: 1px; height: 24px; background: #dcdcdc; margin-left: 9px; }
.q1 { margin-left: 9px; }
.q { margin-left: 9px; }
.v2 { margin-left: 11px; }
.pill { width: 44px; height: 20px; margin-left: 6px; border-radius: 10px; background: #4fa94f; color: #fff; text-align: center; line-height: 20px; font-weight: 700; font-size: 12px; }
.tabs-top { display: flex; margin-left: 16px; white-space: nowrap; }
.w50 { width: 50px; } .w53 { width: 53px; } .w74 { width: 74px; } .w77 { width: 77px; } .w88 { width: 88px; }
.search { display: flex; align-items: center; gap: 1px; margin-left: 0; color: #555; white-space: nowrap; }
.top-right { display: flex; align-items: center; margin-left: auto; padding-right: 7px; color: #555; }
.mlg { margin-left: 10px; }
.tx { margin-left: 4px; white-space: nowrap; }
.v3 { margin-left: 9px; }
.dots { width: 4px; height: 14px; margin-left: 14px; }

/* ribbon */
.ribbon { height: 65px; flex: none; display: flex; background: #f3f3f3; box-shadow: 0 2px 3px rgba(0,0,0,.08); position: relative; z-index: 2; }
.group { position: relative; height: 63px; flex: none; border-right: 1px solid #e2e2e2; display: flex; }
.corner::after { content: ""; position: absolute; right: 5px; bottom: 4px; width: 4px; height: 4px; border-right: 1px solid #888; border-bottom: 1px solid #888; }
.big { display: flex; flex-direction: column; align-items: center; padding-top: 7px; flex: none; }
.lb { margin-top: 2px; height: 18px; line-height: 18px; white-space: nowrap; color: #555; }
.g1 { width: 148px; }
.paste { width: 42px; }
.paste svg { margin-right: 2px; }
.small-col { width: 52px; margin-left: 4px; display: flex; flex-direction: column; padding-top: 5.500px; gap: 7px; }
.sm { display: flex; align-items: center; gap: 4px; height: 19px; white-space: nowrap; color: #555; }
.brush { width: 42px; }
.g2 { width: 264px; flex-direction: column; padding-left: 6px; padding-top: 3px; }
.row-a { display: flex; align-items: center; height: 24px; }
.combo { display: flex; height: 24px; border: 1px solid #d4d4d4; border-radius: 5px; background: #fafafa; overflow: hidden; }
.font { width: 192px; }
.combo-main { flex: 1; padding-left: 5px; line-height: 22px; position: relative; font-size: 12.500px; }
.combo-size { width: 70px; padding-left: 3px; border-left: 1px solid #d4d4d4; line-height: 22px; position: relative; font-size: 12.500px; }
.combo-main .cr, .combo-size .cr { position: absolute; right: 5px; top: 10px; }
.a1 { width: 18px; height: 22px; margin-left: 7px; }
.a2 { width: 18px; height: 22px; margin-left: 9px; }
.row-b { display: flex; margin-top: 2px; height: 24px; }
.fontrow { display: grid; grid-template-columns: 25px 25px 25px 37px 34px 38px 34px 36px; }
.cell { display: flex; align-items: center; justify-content: center; }
.cell .cr { margin-left: 3px; flex: none; }
.g3 { width: 277px; padding-left: 7px; padding-top: 3px; }
.align-block { width: 129px; display: flex; flex-direction: column; gap: 2px; }
.al-row { display: flex; gap: 1px; height: 24px; }
.al { width: 24px; height: 24px; display: flex; align-items: center; justify-content: center; border-radius: 3px; }
.al.on { background: #bfbfbf; }
.merge { width: 84px; margin-top: -3px; }
.wrap { width: 46px; margin-top: -3px; }
.g4 { width: 151px; flex-direction: column; padding-left: 6px; padding-top: 3px; }
.num { width: 140px; flex: none; }
.num .combo-main { padding-left: 5px; }
.numrow { display: grid; grid-template-columns: 37px 20px 32px 22px 30px; margin-top: 2px; height: 24px; }
.pct { font-family: "Liberation Sans", sans-serif; font-size: 19px; color: #444; }
.dt { font-family: "Liberation Sans", sans-serif; font-size: 9px; fill: #444; }
.g5 { width: 147px; }
.b72 { width: 75px; }
.b70 { width: 60px; }
.g6 { width: 577px; display: grid; grid-template-columns: 46px 45px 44px 44px 48px 54px 57px 66px 64px 49px 44px; padding-left: 8px; }

/* formula bar */
.formula { height: 44px; flex: none; background: #e6e6e6; display: flex; align-items: flex-start; padding-top: 12px; }
.namebox { width: 147px; height: 23px; background: #fff; border: 1px solid #d2d2d2; border-left: 0; border-radius: 0 4px 4px 0; text-align: center; line-height: 22px; font-family: "Liberation Mono", monospace; font-size: 12px; color: #333; position: relative; padding-right: 10px; }
.namebox .cr { position: absolute; right: 3px; top: 10px; margin: 0; }
.zoomer { margin: 3px 0 0 49px; }
.fx { margin-left: 10px; width: 23px; font: italic 17px/22px "Liberation Serif", serif; color: #555; }
.fbox { width: 1621px; height: 23px; background: #fff; border: 1px solid #d2d2d2; border-radius: 4px; }

/* sheet */
.sheet { flex: 1; display: flex; min-height: 0; position: relative; }
.viewport { flex: 1; position: relative; background: #fff; padding: 22px 0 0 15px; overflow: hidden; }
.band-col { position: absolute; left: 774px; top: 0; bottom: 0; width: 111px; background: #8fff8f; }
.band-row { position: absolute; left: 0; right: 0; top: 198px; height: 16px; background: #8fff8f; }
.panel { position: relative; width: 1171px; height: 568px; background: #99ccff; border: 2px solid; border-color: #ccffff #999 #999 #ccffff; }
.pband-col { position: absolute; left: 757px; top: -2px; bottom: -2px; width: 111px; background: #97dfd6; }
.pband-row { position: absolute; left: -2px; right: -2px; top: 174px; height: 16px; background: #97dfd6; }
.cellsel { position: absolute; z-index: 3; left: 756px; top: 173px; width: 113px; height: 18px; background: #99ccff; border: 2px solid #4aa84a; }
.handle { position: absolute; right: -5px; bottom: -5px; width: 7px; height: 7px; background: #4aa84a; border: 1px solid #fff; }

.headline { position: relative; z-index: 1; height: 97px; display: flex; justify-content: space-between; padding-left: 159px; padding-right: 86px; }
.title { margin: 27px 0 0; font: italic 700 37px/46px "Liberation Serif", "Noto Sans CJK TC", serif; white-space: pre; background: linear-gradient(#ffe14a 10%, #ffb000 45%, #ff9900 65%, #c9900f 90%); -webkit-background-clip: text; background-clip: text; color: transparent; filter: drop-shadow(1px 1px 0 rgba(150,110,30,.55)); height: 46px; }
.ttl-cj { font-size: 37px; }
.ttl-la { font-size: 39px; letter-spacing: 1.200px; }
.price { display: flex; align-items: center; height: 30px; margin-top: 53px; }
.price-l { width: 53px; color: #f00; font-weight: 700; font-size: 16px; white-space: nowrap; }
.price-v { width: 75px; height: 30px; background: #fff; border: 1px solid; border-color: #999 #dfffdf #dfffdf #999; color: #f00; font: 700 16px/28px "Liberation Sans", sans-serif; text-align: center; position: relative; }
.price-v::after { content: ""; position: absolute; right: -5px; top: -1px; border-top: 5px solid #0a7d0a; border-right: 5px solid transparent; }
.price-u { margin-left: 11px; color: #f00; font-size: 16px; white-space: nowrap; }

.sec { position: relative; z-index: 1; height: 65px; margin-top: 15px; display: grid; grid-template-columns: 109px 218px 800px; grid-template-rows: 100%; color: #000; }
.sec1 { height: 77px; margin-top: 0; }
.sec2 { margin-top: 16px; }
.sk { width: 109px; height: 90px; }
.ln { fill: none; stroke: #000; stroke-width: 1.100; }
.sktx { font-family: "Liberation Mono", monospace; font-size: 12.500px; fill: #000; stroke: none; }
.wd { display: flex; flex-direction: column; justify-content: flex-end; padding-left: 2px; }
.name { position: relative; height: 24px; line-height: 16px; padding-left: 10px; font-size: 15px; color: #000; white-space: nowrap; }
.n1 { padding-left: 17px; height: 27px; line-height: 20px; }
.tick { position: absolute; left: -2px; top: -1px; border-top: 5px solid #0a7d0a; border-right: 5px solid transparent; }
.frame { width: 202px; height: 42px; flex: none; border-style: solid; border-width: 8px 9px 10px; border-color: #ffd633 #b59208 #cca300 #ffdb4d; }
.f1 { margin-bottom: -1px; }
.f2 { margin-bottom: -2px; }
.dd { height: 24px; display: flex; background: #fff; border: 1px solid #a8a8a8; }
.dd-t { flex: 1; padding-left: 3px; font: 12px/22px "Liberation Mono", "Noto Sans CJK SC", monospace; letter-spacing: -.6px; white-space: nowrap; overflow: hidden; color: #000; }
.x { display: inline-block; width: 12px; text-align: center; font-family: "Noto Sans CJK SC", sans-serif; letter-spacing: 0; }
.dd-b { width: 24px; background: #ddd; border-left: 1px solid #bbb; display: flex; align-items: center; justify-content: center; }
.ddi { width: 9px; height: 6px; }

.tbl { display: grid; grid-template-columns: 35px 35px 34px 36px 34px 34px 78px 70px 74px 110.500px 89.500px 75px 95px; grid-template-rows: 39px 26px; border-right: 1px solid #ccffff; border-bottom: 1px solid #999; height: 66px; }
.t1 { grid-template-rows: 51px 26px; height: 78px; }
.h { border-left: 1px solid #ccffff; border-top: 1px solid #ccffff; display: flex; flex-direction: column; align-items: center; justify-content: center; color: #f0ffff; font: 12px/17px "Liberation Mono", monospace; }
.s2 { grid-column: span 2; }
.cj { font: 13px/17px "Noto Sans CJK SC", sans-serif; white-space: nowrap; }
.un { font: 12px/17px "Liberation Mono", monospace; letter-spacing: -.2px; color: #e8f8ff; }
.un sup { font-size: 8px; line-height: 0; vertical-align: 4px; }
.un.k { color: #000; }
.k { color: #000; }
.hq { color: #f00; }
.one { padding-bottom: 4px; }
.v { border-left: 1px solid #ccffff; border-top: 1px solid #ccffff; display: flex; align-items: center; justify-content: center; padding-top: 2px; color: #0000ff; font: 12px/20px "Liberation Mono", monospace; letter-spacing: -.2px; white-space: nowrap; }
.rt { justify-content: flex-end; padding-right: 9px; color: #000; }
.qv { background: #8fff8f; color: #f00; padding-right: 5px; }
.qty-first { justify-content: flex-start; padding: 1px 0 0 1px; align-items: stretch; }
.qtop { height: 25px; background: #99ccff; border-right: 2px solid #6f8fb0; color: #f00; font: 13px/24px "Noto Sans CJK SC", sans-serif; text-align: center; padding-left: 8px; }
.qopt { height: 24px; display: flex; align-items: center; border: 1px solid #a9a9a9; color: #000; font: 12.500px/22px "Noto Sans CJK SC", sans-serif; padding-left: 13px; background: #97dfd6; }
.radio { width: 12px; height: 12px; border-radius: 50%; background: #fff; border: 1px solid #888; position: relative; flex: none; }
.radio.on::after { content: ""; position: absolute; inset: 2px; border-radius: 50%; background: #333; }
.rl { margin-left: 3px; width: 29px; white-space: nowrap; }

.totals { position: relative; z-index: 1; height: 26px; margin: 10px 0 0 683px; display: grid; grid-template-columns: 74px 110.500px 89.500px 75px 95px; align-items: center; justify-items: center; color: #0000ff; font: 14px/26px "Liberation Sans", sans-serif; }
.t-name { font: 700 13px/26px "Noto Sans CJK SC", sans-serif; }
.note { position: relative; z-index: 1; margin: 0; height: 22px; padding-left: 20px; display: flex; align-items: center; font: 14px/22px "Liberation Mono", "Noto Sans CJK SC", monospace; letter-spacing: -.25px; color: #000; white-space: pre; }
.note-cj { font: 15px/22px "Noto Sans CJK SC", sans-serif; margin-right: 9px; letter-spacing: 0; }

.vscroll { width: 22px; flex: none; background: #e6e6e6; border-left: 1px solid #d8d8d8; padding-left: 2px; display: flex; flex-direction: column; }
.vs-top { height: 14px; width: 15px; position: relative; }
.vs-top::after { content: ""; position: absolute; left: 3px; right: 2px; top: 5px; height: 3px; border-top: 1px solid #aaa; border-bottom: 1px solid #aaa; }
.vs-track { flex: 1; width: 15px; background: #dcdcdc; position: relative; }
.vs-up { position: absolute; left: 4px; top: 7px; border-left: 3px solid transparent; border-right: 3px solid transparent; border-bottom: 4px solid #888; }
.vs-thumb { position: absolute; left: 0; top: 128px; width: 14px; height: 44px; border: 1px solid #aaa; border-radius: 7px; background: #f3f3f3; }

/* tabs */
.tabbar { height: 22px; flex: none; display: flex; align-items: stretch; background: #e6e6e6; border-top: 1px solid #c4c4c4; }
.tabnav { width: 110px; flex: none; display: flex; align-items: center; padding-left: 6px; gap: 15px; }
.nav { width: 10px; height: 14px; }
.sheets { display: flex; flex: none; background: #ccc; }
.st { padding: 0 16px; line-height: 21px; color: #555; white-space: nowrap; box-shadow: inset -1px 0 0 #b4b4b4; }
.red { background: #f00; color: #fff; box-shadow: none; margin-right: 1px; }
.act { background: #fff; color: #3aa03a; position: relative; box-shadow: none; }
.act::after { content: ""; position: absolute; left: 6px; right: 5px; bottom: 1px; height: 2px; background: #f00; }
.cut { padding: 0 4px 0 5px; width: 45px; overflow: hidden; box-shadow: none; }
.more { margin-left: 11px; width: 26px; font: 700 12px/19px "Liberation Sans", sans-serif; color: #444; }
.plus { width: 12px; height: 12px; margin-top: 4px; }
.hs-sep { width: 1px; height: 14px; margin-top: 3px; background: #aaa; }
.hs-a { margin-left: 19px; }
.hs-b { margin-left: 6px; }
.hscroll { width: 485px; height: 17px; margin: 2px 0 0 8px; background: #dcdcdc; position: relative; }
.hs-l { position: absolute; left: 6px; top: 5px; border-top: 3px solid transparent; border-bottom: 3px solid transparent; border-right: 4px solid #777; }
.hs-r { position: absolute; right: 6px; top: 5px; border-top: 3px solid transparent; border-bottom: 3px solid transparent; border-left: 4px solid #777; }
.hs-thumb { position: absolute; left: 105px; top: 0; width: 44px; height: 16px; background: #f3f3f3; border: 1px solid #aaa; border-radius: 8px; }
.status { height: 6px; flex: none; background: #f3f3f3; display: flex; padding-left: 1530px; }
.st-a { width: 22px; height: 4px; margin-top: 2px; background: #c8c8c8; border-radius: 2px 2px 0 0; }
.st-b { width: 30px; height: 4px; margin: 2px 0 0 29px; background: #c8c8c8; border-radius: 2px 2px 0 0; }
.st-c { width: 1px; height: 6px; margin-left: 36px; background: #ddd; }

/* watermark */
.mark { position: absolute; z-index: 5; left: 1622px; top: 910px; display: flex; gap: 4px; pointer-events: none; }
.shield { width: 58px; height: 68px; }
.mk-y { font: 9px "Liberation Sans", sans-serif; fill: #dff; }
.mk-text { padding-top: 8px; display: flex; flex-direction: column; }
.mk-cn { font: 700 22px/32px "Noto Sans CJK SC", sans-serif; white-space: nowrap; transform: scaleY(1.3); }
.mk-t { color: #7fc9c6; font-weight: 400; }
.mk-g { color: #6d6d6d; }
.mk-url { margin-top: 5px; font: 14px/12px "Liberation Serif", serif; letter-spacing: 4.400px; color: #6d6d6d; white-space: nowrap; transform: scaleY(.75); }
```
